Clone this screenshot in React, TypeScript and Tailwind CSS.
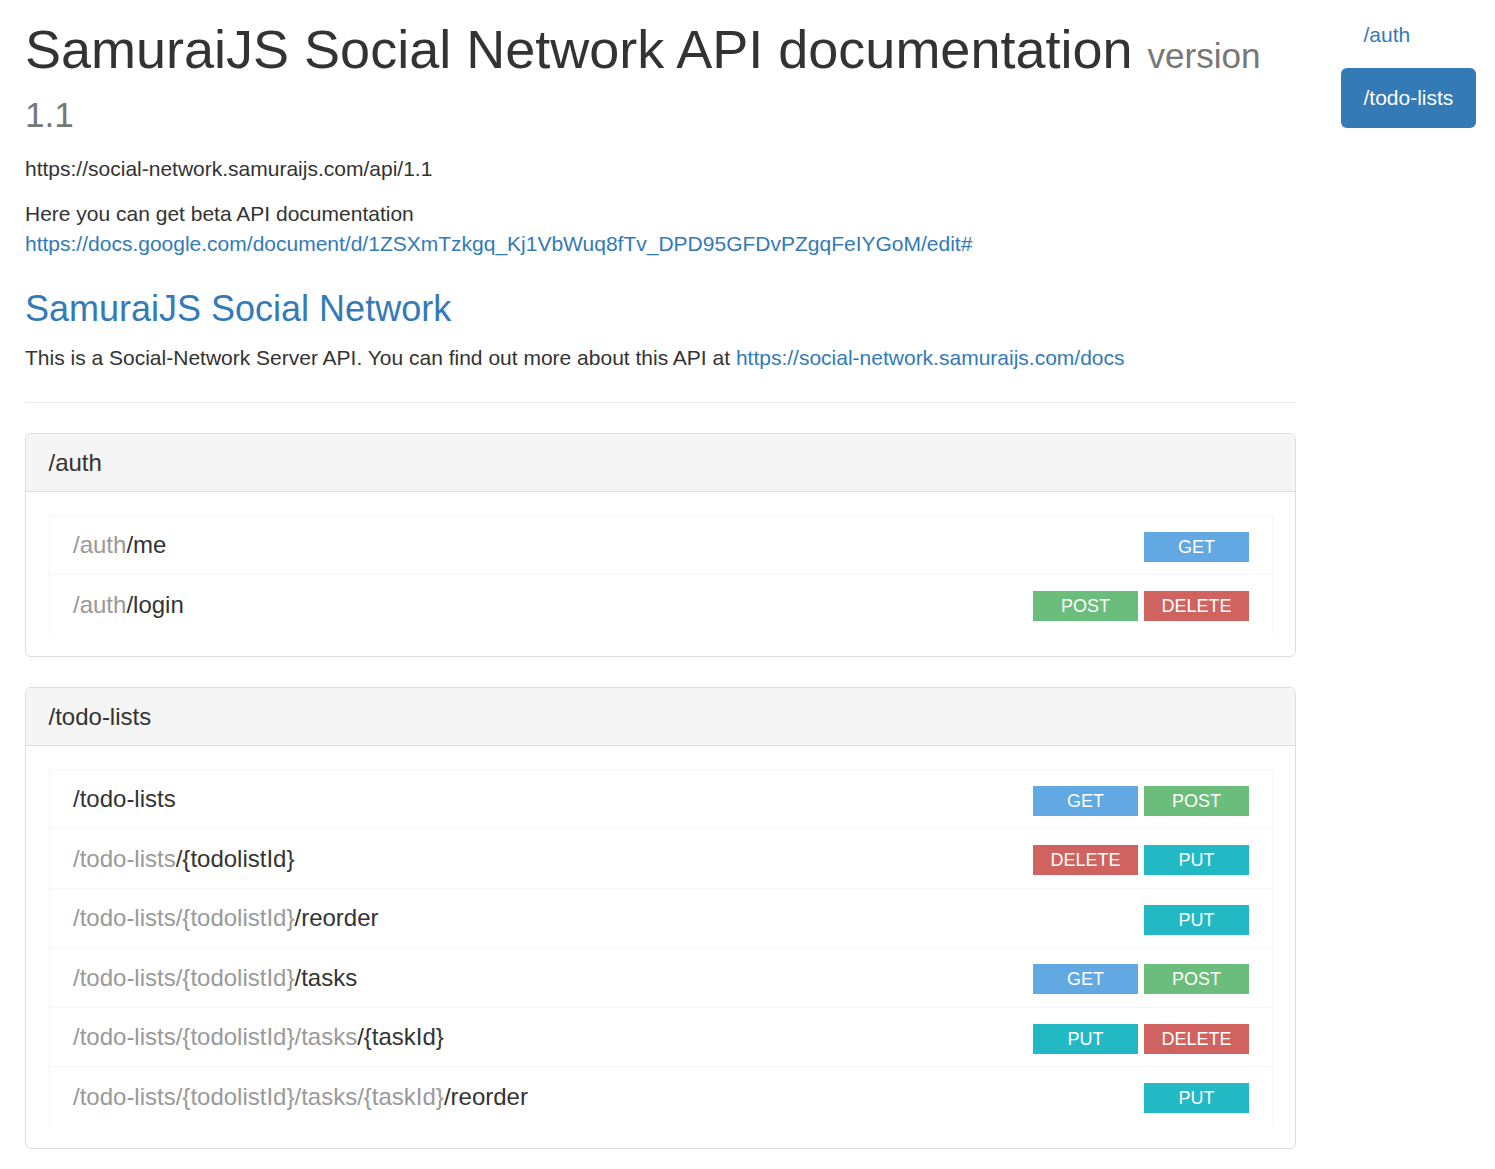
type Method = "GET" | "POST" | "PUT" | "DELETE";

const methodColor: Record<Method, string> = {
  GET: "bg-[#62a8e2]",
  POST: "bg-[#6bbd7c]",
  PUT: "bg-[#22b9c5]",
  DELETE: "bg-[#d0635f]",
};

type Endpoint = { base: string; tail: string; methods: Method[] };

const sections: { title: string; endpoints: Endpoint[] }[] = [
  {
    title: "/auth",
    endpoints: [
      { base: "/auth", tail: "/me", methods: ["GET"] },
      { base: "/auth", tail: "/login", methods: ["POST", "DELETE"] },
    ],
  },
  {
    title: "/todo-lists",
    endpoints: [
      { base: "", tail: "/todo-lists", methods: ["GET", "POST"] },
      { base: "/todo-lists", tail: "/{todolistId}", methods: ["DELETE", "PUT"] },
      { base: "/todo-lists/{todolistId}", tail: "/reorder", methods: ["PUT"] },
      { base: "/todo-lists/{todolistId}", tail: "/tasks", methods: ["GET", "POST"] },
      { base: "/todo-lists/{todolistId}/tasks", tail: "/{taskId}", methods: ["PUT", "DELETE"] },
      { base: "/todo-lists/{todolistId}/tasks/{taskId}", tail: "/reorder", methods: ["PUT"] },
    ],
  },
];

function Badge({ method }: { method: Method }) {
  return (
    <span
      className={`flex h-[30px] w-[105px] items-center justify-center text-[18px] leading-none text-white ${methodColor[method]}`}
    >
      {method}
    </span>
  );
}

function Panel({ title, endpoints }: { title: string; endpoints: Endpoint[] }) {
  return (
    <div className="mb-[30px] rounded-[6px] border border-[#ddd] bg-white">
      <div className="flex h-[58px] items-center rounded-t-[6px] border-b border-[#ddd] bg-[#f5f5f5] px-[22.5px] text-[24px] text-[#333]">
        {title}
      </div>
      <div className="p-[22.5px]">
        {endpoints.map((e, i) => (
          <div
            key={i}
            className="flex h-[59.5px] items-center justify-between border-x border-t border-[#f5f5f5] pr-[22.5px] pl-[23.5px]"
          >
            <span className="text-[24px] text-[#333]">
              <span className="text-[#999]">{e.base}</span>
              {e.tail}
            </span>
            <div className="flex gap-[6px] pt-[3px]">
              {e.methods.map((m) => (
                <Badge key={m} method={m} />
              ))}
            </div>
          </div>
        ))}
      </div>
    </div>
  );
}

export default function App() {
  return (
    <div className="min-h-screen bg-white font-['Liberation_Sans',Arial,sans-serif] text-[#333]">
      <div className="flex gap-[45px] px-[25px]">
        <main className="w-[1271px] shrink-0">
          <h1 className="mt-[20px] mb-[15px] text-[54px] leading-[59.4px]">
            SamuraiJS Social Network API documentation{" "}
            <small className="text-[35.1px] leading-none text-[#777]">
              version
              <br />
              1.1
            </small>
          </h1>
          <p className="mb-[15px] text-[21px] leading-[30px]">
            https://social-network.samuraijs.com/api/1.1
          </p>
          <p className="text-[21px] leading-[30px]">
            Here you can get beta API documentation
            <br />
            <a className="text-[#337ab7]" href="#">
              https://docs.google.com/document/d/1ZSXmTzkgq_Kj1VbWuq8fTv_DPD95GFDvPZgqFeIYGoM/edit#
            </a>
          </p>
          <h2 className="mt-[30px] mb-[15px] text-[36px] leading-[39.6px] text-[#337ab7]">
            SamuraiJS Social Network
          </h2>
          <p className="text-[21px] leading-[30px]">
            This is a Social-Network Server API. You can find out more about this API at{" "}
            <a className="text-[#337ab7]" href="#">
              https://social-network.samuraijs.com/docs
            </a>
          </p>
          <hr className="mt-[29px] mb-[30px] border-t border-[#eee]" />
          {sections.map((s) => (
            <Panel key={s.title} title={s.title} endpoints={s.endpoints} />
          ))}
        </main>
        <nav className="flex w-fit shrink-0 flex-col gap-[3px] pt-[5px] whitespace-nowrap">
          <a
            href="#"
            className="flex h-[60px] items-center rounded-[6px] px-[22.5px] text-[21px] text-[#337ab7]"
          >
            /auth
          </a>
          <a
            href="#"
            className="flex h-[60px] items-center rounded-[6px] bg-[#337ab7] px-[22.5px] text-[21px] text-white"
          >
            /todo-lists
          </a>
        </nav>
      </div>
    </div>
  );
}
